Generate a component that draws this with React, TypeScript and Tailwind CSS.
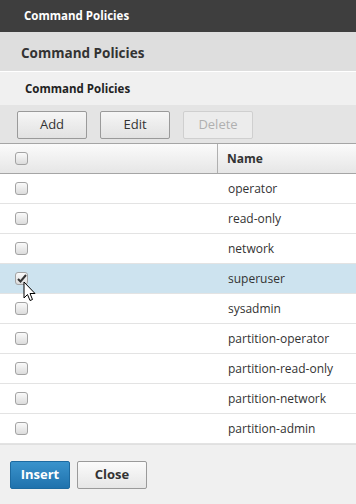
import React from "react";

const policies = [
  "operator",
  "read-only",
  "network",
  "superuser",
  "sysadmin",
  "partition-operator",
  "partition-read-only",
  "partition-network",
  "partition-admin",
];

const Checkbox = ({ checked }: { checked?: boolean }) => (
  <span className="flex h-[13px] w-[13px] items-center justify-center rounded-[3px] border border-[#a3a3a3] bg-gradient-to-b from-[#fafafa] to-[#dcdcdc]">
    {checked && (
      <svg width="10" height="9" viewBox="0 0 10 9">
        <path d="M1 5 L3.5 7.5 L9 1" fill="none" stroke="#333" strokeWidth="2" />
      </svg>
    )}
  </span>
);

// mouse pointer hovering the selected checkbox
const Cursor = () => (
  <svg
    className="absolute left-[23px] top-[17px] z-10"
    width="14"
    height="22"
    viewBox="0 0 14 22"
  >
    <path
      d="M1 1 L1 17 L4.5 13.5 L7 19.5 L9.5 18.5 L7 12.5 L12 12.5 Z"
      fill="#fff"
      stroke="#000"
      strokeWidth="1"
      strokeLinejoin="round"
    />
  </svg>
);

const ToolButton = ({ text, disabled }: { text: string; disabled?: boolean }) => (
  <button
    className={
      disabled
        ? "h-[28px] w-[70px] rounded-[2px] border border-[#cfcfcf] bg-[#ececec] text-[13px] text-[#b0b0b0]"
        : "h-[28px] w-[70px] rounded-[2px] border border-[#9a9a9a] bg-gradient-to-b from-[#f6f6f6] to-[#e2e2e2] text-[13px] text-[#333]"
    }
  >
    {text}
  </button>
);

export default function App() {
  return (
    <div
      className="flex h-[504px] w-[356px] flex-col bg-[#f0f0f0] text-[#333]"
      style={{ fontFamily: '"Open Sans", "Noto Sans", sans-serif' }}
    >
      <div className="flex h-[32px] items-center bg-[#3e3e3e] pl-[24px] text-[11.5px] font-bold text-white">
        Command Policies
      </div>
      <div className="flex h-[40px] items-center border-b border-white bg-[#dedede] pl-[21px] pt-[3px] text-[13.5px] font-bold text-[#333]">
        Command Policies
      </div>
      <div className="flex h-[33px] items-center bg-[#f0f0f0] pl-[25px] text-[11.5px] font-bold text-[#222]">
        Command Policies
      </div>
      <div className="flex h-[38px] items-center gap-[13px] bg-[#e4e4e4] pl-[17px] pt-[1px]">
        <ToolButton text="Add" />
        <ToolButton text="Edit" />
        <ToolButton text="Delete" disabled />
      </div>
      <div className="flex flex-col bg-white">
        <div className="flex h-[31px] border-y border-[#a5a5a5] bg-gradient-to-b from-[#fbfbfb] to-[#e6e6e6]">
          <div className="flex w-[218px] items-center border-r border-[#b0b0b0] pl-[15px]">
            <Checkbox />
          </div>
          <div className="flex items-center pl-[9px] text-[12px] font-bold text-[#333]">
            Name
          </div>
        </div>
        {policies.map((name) => {
          const selected = name === "superuser";
          return (
            <div
              key={name}
              className={
                selected
                  ? "relative z-10 flex h-[30px] border-b border-[#e3e3e3] bg-[#cde3ef]"
                  : "relative flex h-[30px] border-b border-[#e3e3e3] bg-white"
              }
            >
              <div className="flex w-[218px] items-center pl-[15px]">
                <Checkbox checked={selected} />
              </div>
              <div className="flex items-center pl-[10px] text-[12px] text-[#333]">
                {name}
              </div>
              {selected && <Cursor />}
            </div>
          );
        })}
      </div>
      <div className="flex flex-1 items-start gap-[7px] border-t border-[#e0e0e0] bg-[#f0f0f0] pl-[10px] pt-[16px]">
        <button className="h-[28px] w-[60px] rounded-[2px] border border-[#1d6aa0] bg-gradient-to-b from-[#3a93cc] to-[#1f72ad] text-[13px] font-bold text-white">
          Insert
        </button>
        <button className="h-[28px] w-[70px] rounded-[2px] border border-[#9a9a9a] bg-gradient-to-b from-[#fbfbfb] to-[#e6e6e6] text-[13px] font-bold text-[#333]">
          Close
        </button>
      </div>
    </div>
  );
}
